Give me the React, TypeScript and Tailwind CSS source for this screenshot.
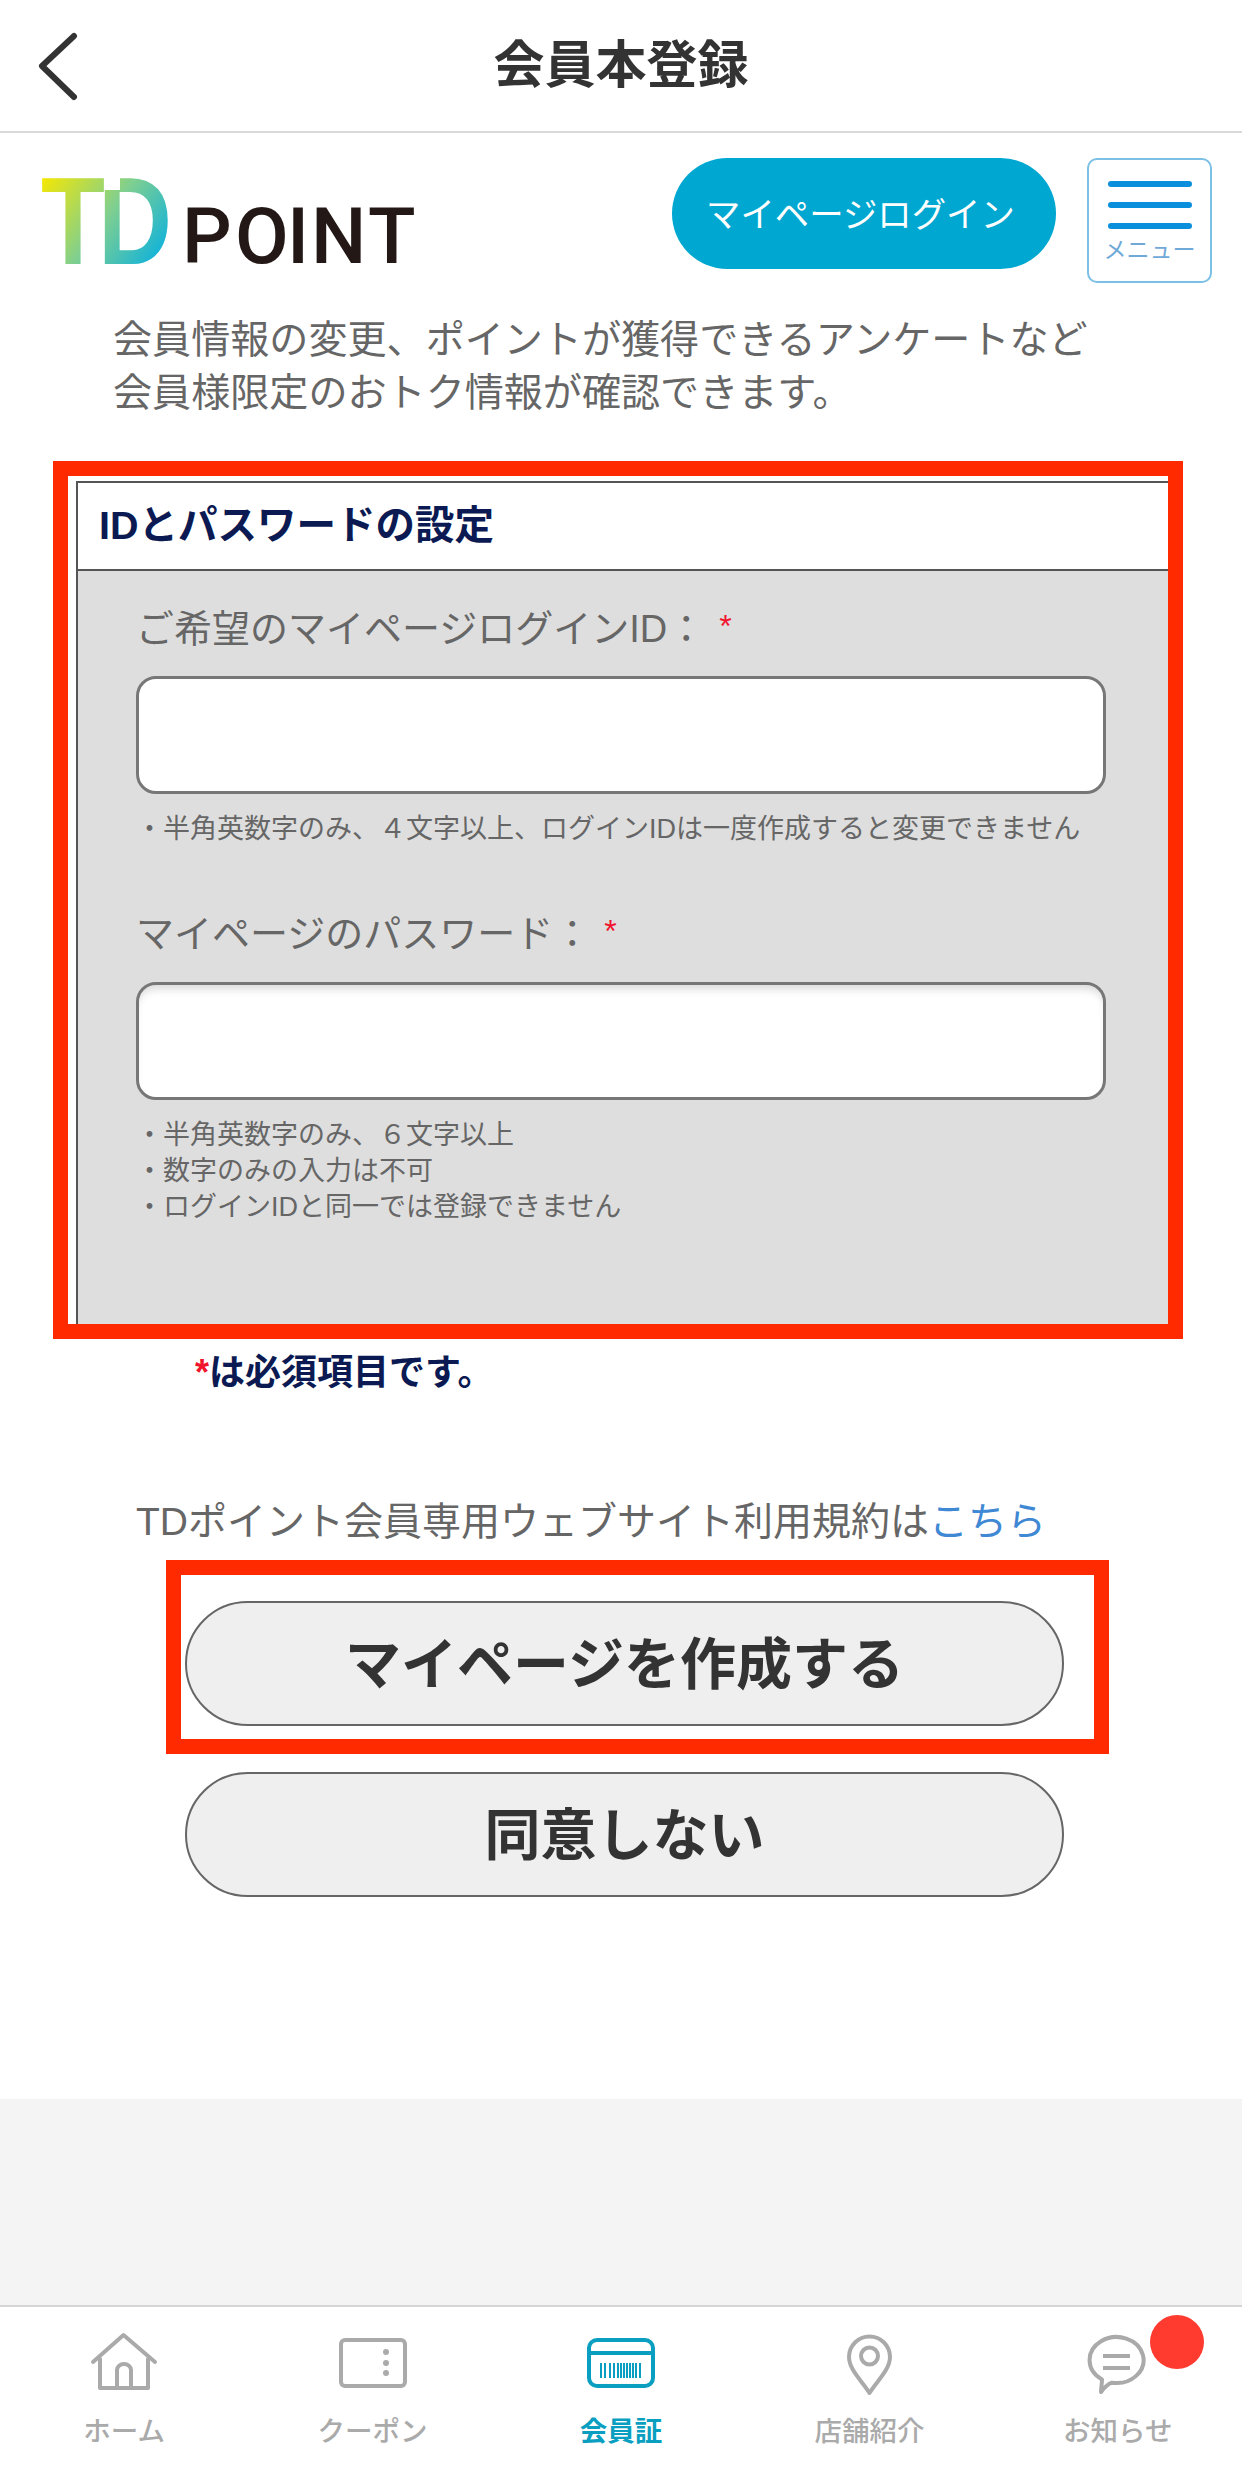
const fontStack = "[font-family:'Liberation_Sans','Noto_Sans_CJK_JP',sans-serif]"

function Logo() {
  return (
    <svg width="372" height="92" viewBox="0 0 372 92" className="mt-[17px] ml-[42px] shrink-0 overflow-visible">
      <defs>
        <linearGradient id="tdGrad" gradientUnits="userSpaceOnUse" x1="0" y1="0" x2="125" y2="90">
          <stop offset="0" stopColor="#f8e800" />
          <stop offset="0.5" stopColor="#7fcf90" />
          <stop offset="1" stopColor="#00aee6" />
        </linearGradient>
      </defs>
      <text x="56" y="89" fontFamily="Liberation Sans" fontWeight="700" fontSize="124" fill="url(#tdGrad)" textLength="74" lengthAdjust="spacingAndGlyphs">D</text>
      {/* gap between the T bar and the D stem */}
      <rect x="60" y="-2" width="18" height="17" fill="#fff" />
      <text x="-1" y="89" fontFamily="Liberation Sans" fontWeight="700" fontSize="124" fill="url(#tdGrad)" textLength="64" lengthAdjust="spacingAndGlyphs">T</text>
      <text x="140 193 245 269 326" y="88" fontFamily="Roboto" fontWeight="500" fontSize="78" fill="#231815">POINT</text>
    </svg>
  )
}

function FieldLabel({ children, gap }: { children: string; gap: string }) {
  return (
    <p className="text-[38px] leading-[50px] text-[#666] flex">
      <span>{children}</span>
      <span className={`${gap} text-[#f0142c] text-[32px] leading-[44px]`}>*</span>
    </p>
  )
}

function HomeIcon() {
  return (
    <svg width="80" height="64" viewBox="0 0 80 64" fill="none" stroke="#aaa" strokeWidth="4" strokeLinecap="round" strokeLinejoin="round">
      <path d="M9 30 L39.5 3 L71 30" />
      <path d="M16 27 V56 H64 V27" />
      <path d="M33 56 V38 A7 6 0 0 1 47 38 V56" />
    </svg>
  )
}

function CouponIcon() {
  return (
    <svg width="80" height="64" viewBox="0 0 80 64" fill="none" stroke="#aaa" strokeWidth="4">
      <rect x="8" y="8" width="64" height="46" rx="4" />
      <circle cx="53" cy="20" r="3" fill="#aaa" stroke="none" />
      <circle cx="53" cy="31" r="3" fill="#aaa" stroke="none" />
      <circle cx="53" cy="41" r="3" fill="#aaa" stroke="none" />
    </svg>
  )
}

function CardIcon() {
  const bars = [20, 24, 29, 33, 37, 40, 43, 46, 49, 52, 55, 59]
  return (
    <svg width="80" height="64" viewBox="0 0 80 64" fill="none" stroke="#0a9fc0" strokeWidth="4">
      <rect x="8" y="8" width="64" height="46" rx="8" />
      <path d="M8 21 H72" />
      {bars.map(x => <path key={x} d={`M${x} 31 V46`} strokeWidth="2" />)}
    </svg>
  )
}

function PinIcon() {
  return (
    <svg width="80" height="64" viewBox="0 0 80 64" fill="none" stroke="#aaa" strokeWidth="4" strokeLinejoin="round">
      <path d="M40.5 61 C34 50 20 38 20 25 A20.5 20.5 0 0 1 61 25 C61 38 47 50 40.5 61Z" />
      <circle cx="40.5" cy="24" r="8.5" />
    </svg>
  )
}

function ChatIcon() {
  return (
    <svg width="80" height="64" viewBox="0 0 80 64" fill="none" stroke="#aaa" strokeWidth="4" strokeLinejoin="round">
      <path d="M24 47.4 A27 23 0 1 1 34 50.7 C30 52 26 56 23 60 C23 56 24 52 24 47.4Z" />
      <path d="M25 24 H52 M25 36 H52" />
    </svg>
  )
}

const tabs = [
  { label: 'ホーム', icon: <HomeIcon /> },
  { label: 'クーポン', icon: <CouponIcon /> },
  { label: '会員証', icon: <CardIcon />, active: true },
  { label: '店舗紹介', icon: <PinIcon /> },
  { label: 'お知らせ', icon: <ChatIcon />, badge: true },
]

export default function App() {
  return (
    <div className={`w-[1242px] h-[2471px] flex flex-col bg-white overflow-hidden ${fontStack}`}>
      {/* Header */}
      <header className="h-[133px] shrink-0 border-b-2 border-[#d9d9d9] grid grid-cols-[1fr_auto_1fr] items-center">
        <svg width="80" height="70" viewBox="0 0 80 70" fill="none" stroke="#333" strokeWidth="6" strokeLinecap="round" strokeLinejoin="round" className="ml-[31px]">
          <path d="M43 5 L11 35 L43 66" />
        </svg>
        <h1 className="text-[51px] leading-none font-bold text-[#333]">会員本登録</h1>
        <div />
      </header>

      {/* Login row */}
      <div className="flex items-start pt-[25px] pr-[30px] shrink-0">
        <Logo />
        <button className="ml-auto w-[384px] h-[111px] rounded-[56px] bg-[#00a7d0] text-white text-[34.4px] flex items-center justify-center pt-[5px] pr-[7px]">
          マイページログイン
        </button>
        <div className="ml-[31px] w-[125px] h-[125px] rounded-[10px] border-2 border-[#7cc0e6] flex flex-col items-center pt-[21px]">
          <span className="w-[84px] h-[6px] rounded-sm bg-[#0a8fdc]" />
          <span className="w-[84px] h-[6px] rounded-sm bg-[#0a8fdc] mt-[15px]" />
          <span className="w-[84px] h-[6px] rounded-sm bg-[#0a8fdc] mt-[15px]" />
          <span className="text-[23px] leading-[26px] text-[#6fa9d8] mt-[8px] whitespace-nowrap">メニュー</span>
        </div>
      </div>

      <p className="mt-[30px] pl-[113px] text-[39.1px] leading-[53px] text-[#666] shrink-0 whitespace-nowrap">
        会員情報の変更、ポイントが獲得できるアンケートなど<br />
        会員様限定のおトク情報が確認できます。
      </p>

      {/* ID and password */}
      <section className="mt-[42px] ml-[53px] w-[1130px] h-[878px] shrink-0 border-[15px] border-[#ff2a00] bg-white pt-[5px] pl-[8px] overflow-hidden">
        <div className="h-full w-[1100px] flex flex-col bg-[#dedede] border-l-2 border-[#555]">
          <h2 className="h-[90px] shrink-0 bg-white border-y-2 border-[#555] pl-[21px] flex items-center text-[39.5px] font-bold text-[#0b1a52]">
            IDとパスワードの設定
          </h2>
          <div className="pl-[58px] pt-[33px]">
            <FieldLabel gap="ml-[14px]">ご希望のマイページログインID：</FieldLabel>
            <div className="mt-[22px] w-[970px] h-[118px] rounded-[20px] border-[3px] border-[#777] bg-white" />
            <p className="mt-[17px] text-[27px] leading-[36px] text-[#666] whitespace-nowrap">
              ・半角英数字のみ、４文字以上、ログインIDは一度作成すると変更できません
            </p>
            <div className="mt-[62px]">
              <FieldLabel gap="ml-[13px]">マイページのパスワード：</FieldLabel>
            </div>
            <div className="mt-[23px] w-[970px] h-[118px] rounded-[20px] border-[3px] border-[#777] bg-white shadow-[inset_0_8px_8px_-4px_rgba(0,0,0,0.15)]" />
            <div className="mt-[17px] text-[27px] leading-[36px] text-[#666]">
              <p>・半角英数字のみ、６文字以上</p>
              <p>・数字のみの入力は不可</p>
              <p>・ログインIDと同一では登録できません</p>
            </div>
          </div>
        </div>
      </section>

      <p className="mt-[12px] pl-[195px] text-[36px] leading-[44px] font-bold text-[#0b1a52] shrink-0">
        <span className="text-[#f0142c]">*</span>は必須項目です。
      </p>

      <p className="mt-[102px] pl-[136px] text-[39px] leading-[50px] text-[#666] shrink-0 whitespace-nowrap">
        TDポイント会員専用ウェブサイト利用規約は<span className="text-[#3f88d4]">こちら</span>
      </p>

      {/* Buttons */}
      <div className="mt-[13px] ml-[166px] w-[943px] h-[194px] shrink-0 border-[15px] border-[#ff2a00] pt-[26px] pl-[4px]">
        <button className="w-[879px] h-[125px] rounded-[63px] border-2 border-[#666] bg-[#efefef] text-[56px] font-bold text-[#333] flex items-center justify-center pt-[3px]">
          マイページを作成する
        </button>
      </div>
      <button className="mt-[18px] ml-[185px] w-[879px] h-[125px] shrink-0 rounded-[63px] border-2 border-[#666] bg-[#efefef] text-[56px] font-bold text-[#333] flex items-center justify-center pt-[3px]">
        同意しない
      </button>

      <div className="flex-1" />
      <div className="h-[206px] shrink-0 bg-[#f4f4f4]" />

      {/* Tab bar */}
      <nav className="h-[166px] shrink-0 border-t-2 border-[#d5d5d5] grid grid-cols-5 bg-white">
        {tabs.map(tab => (
          <div key={tab.label} className="relative flex flex-col items-center pt-[25px]">
            {tab.icon}
            <span className={`mt-[18px] text-[27.5px] leading-[36px] ${tab.active ? 'font-bold text-[#0a9fc0]' : 'font-medium text-[#aaa]'}`}>
              {tab.label}
            </span>
            {tab.badge && <span className="absolute left-[156px] top-[8px] w-[54px] h-[54px] rounded-full bg-[#ff3b30]" />}
          </div>
        ))}
      </nav>
    </div>
  )
}
